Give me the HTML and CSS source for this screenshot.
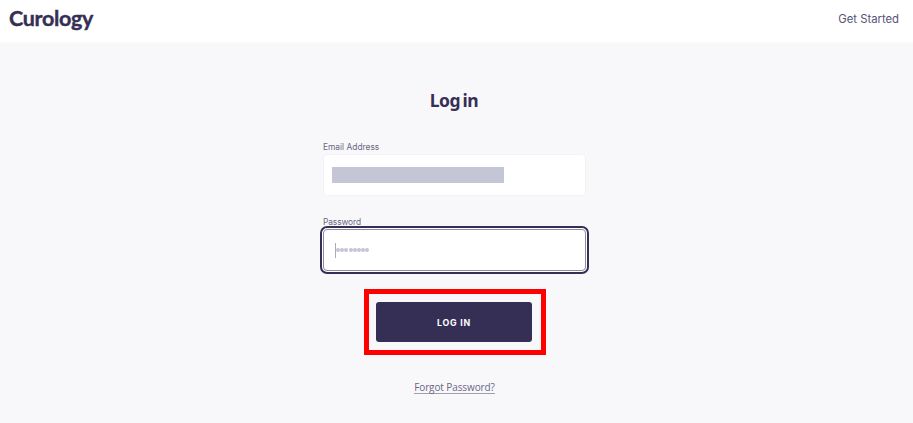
FILE: index.html
```html
<!DOCTYPE html>
<html lang="en">
<head>
  <meta charset="UTF-8">
  <title>Log in | Curology</title>
  <link rel="stylesheet" href="styles.css">
</head>
<body>
  <header class="header">
    <a class="logo">Curology</a>
    <a class="getStarted">Get Started</a>
  </header>

  <main class="main">
    <h1 class="title">Log in</h1>

    <form class="loginForm">
      <label class="label"><span>Email Address</span></label>
      <div class="field">
        <div class="hiddenEmail"></div>
      </div>

      <label class="label passwordLabel"><span>Password</span></label>
      <div class="field focused">
        <div class="caret"></div>
        <div class="dots">
          <i></i><i></i><i></i><i></i><i></i><i></i><i></i><i></i>
        </div>
      </div>

      <div class="highlight">
        <button class="loginBtn" type="button"><span>LOG IN</span></button>
      </div>
    </form>

    <a class="forgot"><span>Forgot Password?</span></a>
  </main>
</body>
</html>
```

FILE: styles.css
```css
* {
  box-sizing: border-box;
}

html, body {
  margin: 0;
  height: 100%;
  overflow: hidden;
  background-color: #f8f8fa;
  font-family: "Open Sans", sans-serif;
  color: #352f56;
}

.header {
  display: flex;
  justify-content: space-between;
  height: 43px;
  padding: 0 14px 0 9px;
  background-color: #fff;
  border-bottom: 1px solid #fbfbfc;
}

.logo {
  font-family: Lato, sans-serif;
  font-size: 21.5px;
  font-weight: 700;
  line-height: 36px;
  letter-spacing: -0.3px;
  -webkit-text-stroke: 0.4px #352f56;
}

.getStarted {
  font-family: Inter, sans-serif;
  font-size: 11.3px;
  line-height: 39px;
  color: #565276;
}

.main {
  display: flex;
  flex-direction: column;
  align-items: center;
  padding-right: 4px;
}

.title {
  margin: 43px 0 0;
  padding-right: 1px;
  font-family: "Noto Sans", sans-serif;
  font-size: 17.5px;
  font-weight: 700;
  line-height: 28px;
  letter-spacing: -0.5px;
  word-spacing: -1.5px;
}

.loginForm {
  display: flex;
  flex-direction: column;
  width: 263px;
  margin-top: 27px;
}

.label {
  font-family: Inter, sans-serif;
  font-size: 8.4px;
  line-height: 13px;
  color: #6a6783;
}

.field {
  display: flex;
  align-items: center;
  height: 42px;
  padding-left: 8px;
  background-color: #fff;
  border: 1px solid #f3f3f6;
  border-radius: 4px;
}

.passwordLabel {
  margin-top: 20px;
  letter-spacing: -0.1px;
}

.focused {
  height: 42px;
  padding-left: 11px;
  border-color: #8d8aa2;
  outline: 2px solid #352f56;
  outline-offset: 1px;
  box-shadow: 0 0 0 1px #fff;
}

.hiddenEmail {
  width: 172px;
  height: 16px;
  background-color: #c4c5d5;
}

.caret {
  width: 1px;
  height: 15px;
  background-color: #aaa9b8;
}

.dots {
  display: flex;
  gap: 0.2px;
}

.dots i {
  width: 4px;
  height: 4px;
  border-radius: 50%;
  background-color: #c4c4d5;
}

.highlight {
  align-self: center;
  margin-top: 18px;
  padding: 8px 9px 8px 7px;
  border: 5px solid #f00;
}

.loginBtn {
  display: block;
  width: 156px;
  height: 40px;
  padding: 1px 0 0 1px;
  border: none;
  border-radius: 3px;
  background-color: #352f56;
  color: #fff;
  font-family: Inter, sans-serif;
  font-size: 8.8px;
  font-weight: 700;
  letter-spacing: 0.8px;
}

.forgot {
  margin-top: 26px;
  font-size: 10px;
  line-height: 12px;
  letter-spacing: -0.1px;
  color: #6a6783;
  border-bottom: 1px solid #a09eb0;
}
```
